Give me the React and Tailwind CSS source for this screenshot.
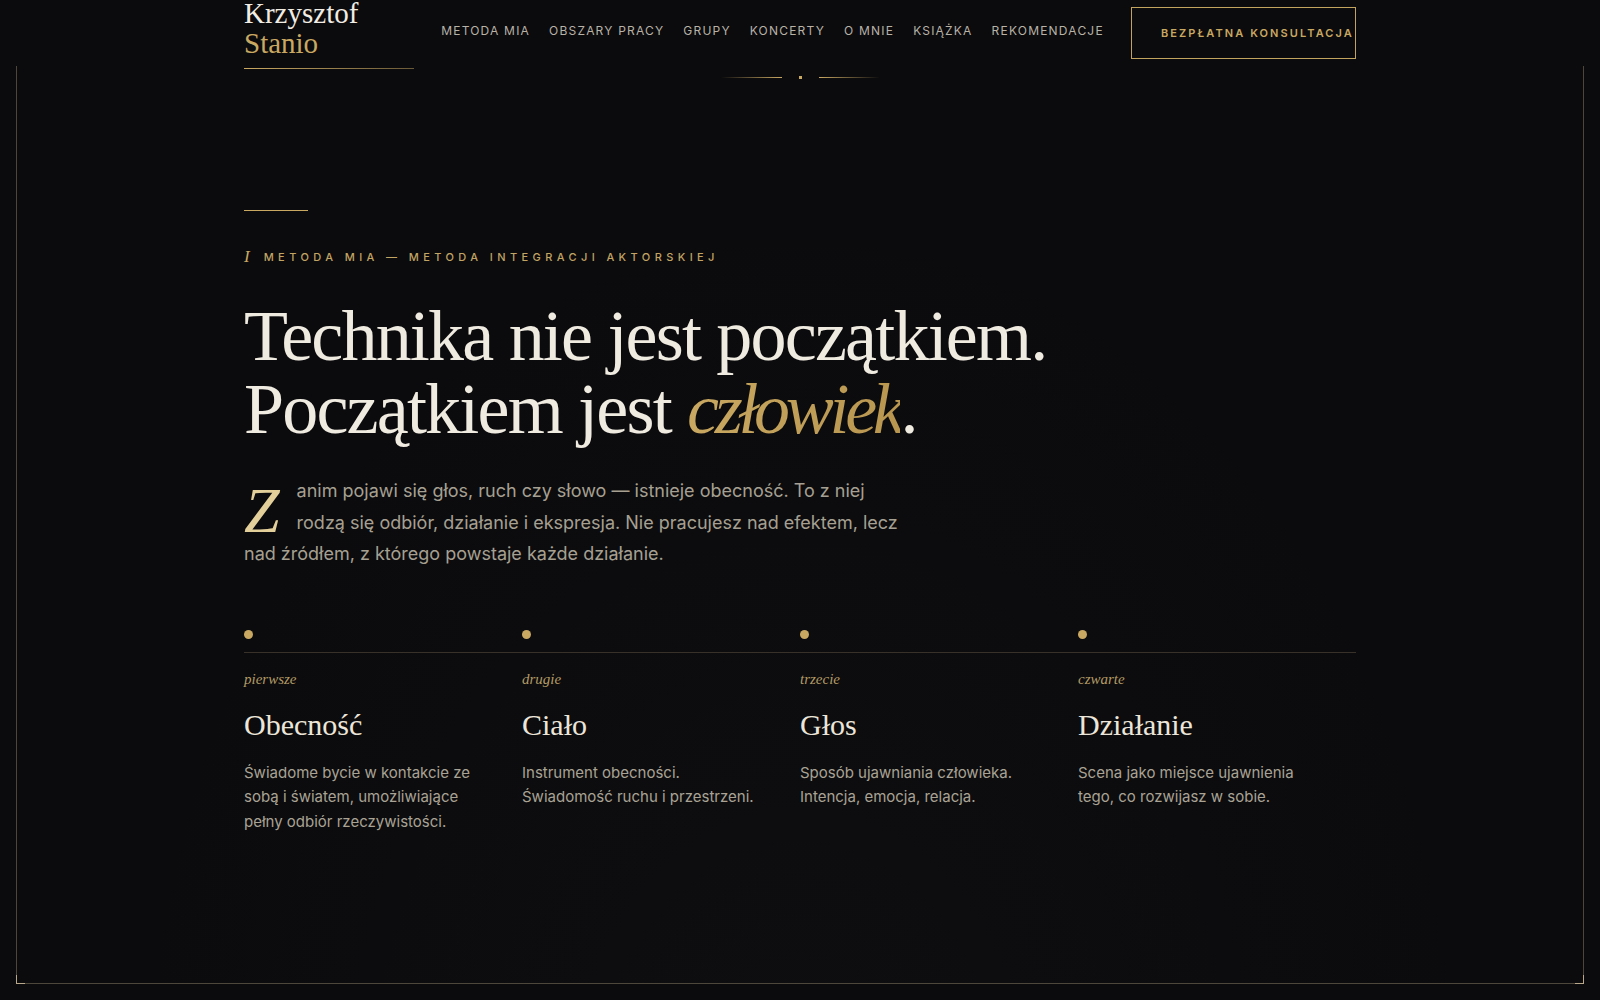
import React from "react";

const serif = { fontFamily: '"Liberation Serif", "Times New Roman", serif' };
const sans = { fontFamily: 'Inter, "Liberation Sans", Arial, sans-serif' };

const navItems = [
  "Metoda MIA",
  "Obszary pracy",
  "Grupy",
  "Koncerty",
  "O mnie",
  "Książka",
  "Rekomendacje",
];

const pillars = [
  {
    label: "pierwsze",
    title: "Obecność",
    text: "Świadome bycie w kontakcie ze sobą i światem, umożliwiające pełny odbiór rzeczywistości.",
  },
  {
    label: "drugie",
    title: "Ciało",
    text: "Instrument obecności. Świadomość ruchu i przestrzeni.",
  },
  {
    label: "trzecie",
    title: "Głos",
    text: "Sposób ujawniania człowieka. Intencja, emocja, relacja.",
  },
  {
    label: "czwarte",
    title: "Działanie",
    text: "Scena jako miejsce ujawnienia tego, co rozwijasz w sobie.",
  },
];

function Header() {
  return (
    <header className="relative z-10 h-[66px] bg-[#0b0b0d]">
      <div className="mx-auto flex h-full w-[1112px] items-center justify-between">
        {/* logo */}
        <div className="relative w-[170px] pb-[10px]" style={serif}>
          <div className="text-[29px] leading-[30px] text-[#f2ede4]">Krzysztof</div>
          <div className="text-[29px] leading-[30px] text-[#c9a862]">Stanio</div>
          <div className="absolute -bottom-px left-0 h-px w-full bg-gradient-to-r from-[#c9a862] to-[#c9a862]/50"></div>
        </div>

        <nav className="-mt-[4px] flex items-center gap-[19px]" style={sans}>
          {navItems.map((item) => (
            <a
              key={item}
              href="#"
              className="text-[12px] uppercase tracking-[0.1em] text-[#b8b2a7] hover:text-[#c9a862] transition-colors"
            >
              {item}
            </a>
          ))}
        </nav>

        <a
          href="#"
          className="flex h-[52px] w-[225px] items-center whitespace-nowrap border border-[#c2a45f] pl-[29px] text-[11px] font-semibold uppercase tracking-[0.19em] text-[#c9a862]"
          style={sans}
        >
          Bezpłatna konsultacja
        </a>
      </div>
    </header>
  );
}

function Pillar({ pillar }) {
  return (
    <div>
      <div className="mb-[13px] h-[9px] w-[9px] rounded-full bg-[#c9a862]"></div>
      <div className="border-t border-[#37312a] pt-[16px]">
        <div className="text-[15px] italic leading-[20px] text-[#b39a64]" style={serif}>
          {pillar.label}
        </div>
        <h3 className="mt-[18px] text-[30px] leading-[36px] text-[#ece6da]" style={serif}>
          {pillar.title}
        </h3>
        <p className="mt-[18px] max-w-[240px] text-[15px] leading-[24.5px] text-[#a9a395]" style={sans}>
          {pillar.text}
        </p>
      </div>
    </div>
  );
}

export default function App() {
  return (
    <div className="min-h-[1000px] bg-[#0b0b0d] pb-[16px]">
      <Header />

      <section className="relative mx-4 h-[918px] border-x border-b border-[#4d463a] bg-[radial-gradient(ellipse_at_50%_115%,#0e0e10_0%,#0b0b0d_60%)]">
        {/* corner accents */}
        <div className="absolute -bottom-px -left-px h-[9px] w-[9px] border-b border-l border-[#b9a98a]"></div>
        <div className="absolute -bottom-px -right-px h-[9px] w-[9px] border-b border-r border-[#b9a98a]"></div>

        {/* ornament */}
        <div className="flex items-center justify-center gap-[17px] pt-[10px]">
          <div className="h-px w-[61px] bg-gradient-to-r from-transparent to-[#c9a862]"></div>
          <div className="h-[3px] w-[3px] bg-[#c9a862]"></div>
          <div className="h-px w-[61px] bg-gradient-to-r from-[#c9a862] to-transparent"></div>
        </div>

        <div className="mx-auto w-[1112px]">
          <div className="mt-[131px] h-px w-[64px] bg-[#c9a862]"></div>

          <div className="mt-[38px] flex items-center gap-[14px]">
            <span className="text-[17px] italic leading-[16px] text-[#c9a862]" style={serif}>
              I
            </span>
            <span
              className="text-[11px] font-medium uppercase leading-[16px] tracking-[0.4em] text-[#c2a463]"
              style={sans}
            >
              Metoda MIA — Metoda Integracji Aktorskiej
            </span>
          </div>

          <h1
            className="mt-[35px] text-[72px] leading-[73px] tracking-[-0.025em] text-[#f0ebe1]"
            style={serif}
          >
            Technika nie jest początkiem.
            <br />
            Początkiem jest{" "}
            <em className="tracking-[-0.06em] bg-gradient-to-r from-[#c9a862] to-[#b89650] bg-clip-text text-transparent">
              człowiek
            </em>
            .
          </h1>

          <p
            className="mt-[29px] max-w-[660px] text-[18px] leading-[31.5px] text-[#a6a092]"
            style={sans}
          >
            <span
              className="float-left mr-[17px] mt-[12px] text-[64px] italic leading-[48px] text-[#e3cf9a]"
              style={serif}
            >
              Z
            </span>
            anim pojawi się głos, ruch czy słowo — istnieje obecność. To z niej rodzą się
            odbiór, działanie i ekspresja. Nie pracujesz nad efektem, lecz nad źródłem, z
            którego powstaje każde działanie.
          </p>

          <div className="mt-[60px] grid grid-cols-4">
            {pillars.map((p) => (
              <Pillar key={p.title} pillar={p} />
            ))}
          </div>
        </div>
      </section>
    </div>
  );
}
